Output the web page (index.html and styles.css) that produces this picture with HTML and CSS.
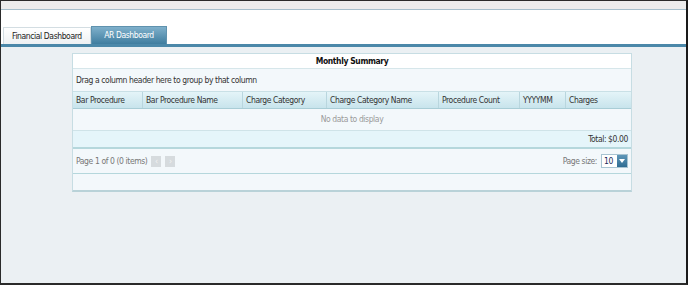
FILE: index.html
```html
<!DOCTYPE html>
<html lang="en">
<head>
    <meta charset="UTF-8">
    <title>AR Dashboard</title>
    <link rel="stylesheet" href="styles.css">
</head>
<body>
    <div class="frame">
        <div class="topstrip"></div>
        <div class="header">
            <div class="tabs">
                <div class="tab">Financial Dashboard</div>
                <div class="tab active">AR Dashboard</div>
            </div>
        </div>
        <div class="tabbar"></div>
        <div class="content">
            <div class="grid">
                <div class="grid-title">Monthly Summary</div>
                <div class="group-panel">Drag a column header here to group by that column</div>
                <div class="cols head">
                    <div>Bar Procedure</div>
                    <div>Bar Procedure Name</div>
                    <div>Charge Category</div>
                    <div>Charge Category Name</div>
                    <div>Procedure Count</div>
                    <div>YYYYMM</div>
                    <div>Charges</div>
                </div>
                <div class="empty-row">No data to display</div>
                <div class="total-row">Total: $0.00</div>
                <div class="pager">
                    <div class="pager-left">
                        <span>Page 1 of 0 (0 items)</span>
                        <span class="pbtn">&lsaquo;</span>
                        <span class="pbtn">&rsaquo;</span>
                    </div>
                    <div class="pager-right">
                        <span>Page size:</span>
                        <div class="combo">
                            <span class="combo-val">10</span>
                            <span class="combo-btn"><svg width="6" height="4" viewBox="0 0 6 4"><path d="M0 0h6L3 4z" fill="#fff"/></svg></span>
                        </div>
                    </div>
                </div>
                <div class="blank-row"></div>
            </div>
        </div>
    </div>
</body>
</html>
```
FILE: styles.css
```css
body {
    margin: 0;
    font-family: "DejaVu Sans Condensed", "DejaVu Sans", sans-serif;
    font-size: 8.5px;
    letter-spacing: -0.4px;
    color: #333;
}

.frame {
    box-sizing: border-box;
    width: 688px;
    height: 285px;
    border: 1px solid #2a2a2a;
    border-right: 2px solid #1a1a1a;
    border-bottom: 2px solid #2a2a2a;
    display: flex;
    flex-direction: column;
    background-color: #ebf0f3;
}

.topstrip {
    height: 8px;
    background-color: #ececec;
    border-bottom: 1px solid #a6bfcc;
}

.header {
    background-color: #fff;
    height: 34px;
    display: flex;
    align-items: flex-end;
    padding-left: 2px;
}

.tabs {
    display: flex;
    align-items: flex-end;
}

.tab {
    height: 16px;
    line-height: 16px;
    padding: 0 8px;
    width: 70px;
    background: linear-gradient(#ffffff, #eef1f3);
    border: 1px solid #d3dde2;
    border-bottom: none;
    color: #222;
}

.tab.active {
    width: 58px;
    height: 17px;
    line-height: 17px;
    text-align: center;
    background: linear-gradient(#7fb0cb, #3f7d9f);
    border-color: #5f92ae;
    color: #fff;
}

.tabbar {
    height: 3px;
    background-color: #4b88a9;
}

.content {
    flex: 1;
    padding: 6px 0 0 71px;
}

.grid {
    width: 558px;
    border: 1px solid #c7dde3;
    border-bottom: 2px solid #b9d2d8;
    background-color: #f3f8fb;
}

.grid-title {
    height: 14px;
    line-height: 14px;
    background-color: #fff;
    text-align: center;
    font-weight: bold;
    color: #111;
    border-bottom: 1px solid #d6e6ea;
}

.group-panel {
    height: 22px;
    line-height: 22px;
    padding-left: 3px;
    border-bottom: 1px solid #c9e0e6;
}

.cols {
    display: grid;
    grid-template-columns: 70px 100px 84px 112px 81px 46px 65px;
}

.head {
    height: 16px;
    background: linear-gradient(#e4f4f8, #c8e4ec);
    border-bottom: 1px solid #a9cdd6;
}

.head div {
    line-height: 16px;
    padding-left: 3px;
    border-right: 1px solid #b9d6de;
}

.head div:last-child {
    border-right: none;
}

.empty-row {
    height: 21px;
    line-height: 21px;
    text-align: center;
    color: #9a9a9a;
    border-bottom: 1px solid #cfe3e8;
}

.total-row {
    height: 16px;
    line-height: 17px;
    text-align: right;
    padding-right: 3px;
    background-color: #e5f5fa;
    border-bottom: 2px solid #b5d7dc;
}

.pager {
    height: 24px;
    display: flex;
    align-items: center;
    justify-content: space-between;
    padding: 0 3px;
    color: #777;
    border-bottom: 1px solid #b5d7dc;
}

.pager-left,
.pager-right {
    display: flex;
    align-items: center;
    gap: 3px;
}

.pbtn {
    width: 10px;
    height: 11px;
    line-height: 11px;
    text-align: center;
    background-color: #d6dbde;
    color: #f4f4f4;
    margin-left: 1px;
}

.combo {
    display: flex;
    height: 12px;
    border: 1px solid #a8c4d2;
    background-color: #fff;
    margin-left: 1px;
}

.combo-val {
    width: 13px;
    padding-left: 2px;
    line-height: 12px;
    color: #1a2a5a;
}

.combo-btn {
    width: 10px;
    background: linear-gradient(#5f97b9, #2f6c92);
    display: flex;
    align-items: center;
    justify-content: center;
}

.blank-row {
    height: 16px;
}
```
